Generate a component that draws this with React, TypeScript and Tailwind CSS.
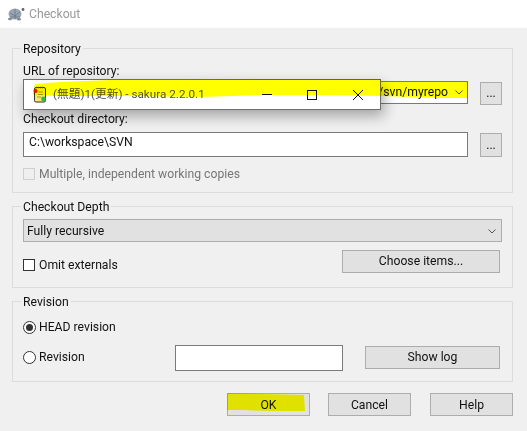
const font = { fontFamily: 'Roboto, "Noto Sans CJK JP", sans-serif' };

// ─── Small controls ──────────────────────────────────────────────────────────
const Chevron = () => (
  <svg width="8" height="5" viewBox="0 0 8 5" className="shrink-0">
    <path d="M0.5 0.5 L4 4 L7.5 0.5" fill="none" stroke="#555" strokeWidth="1" />
  </svg>
);

const Button = ({ label, className }: { label: string; className: string }) => (
  <button className={`flex items-center justify-center bg-[#e1e1e1] border border-[#adadad] text-[#111] text-[12.2px] ${className}`}>
    {label}
  </button>
);

const Radio = ({ checked }: { checked?: boolean }) => (
  <span className="flex items-center justify-center w-[13px] h-[13px] rounded-full border border-[#333] bg-white shrink-0">
    {checked && <span className="w-[7px] h-[7px] rounded-full bg-[#333]" />}
  </span>
);

const Group = ({ title, className, children }: { title: string; className: string; children: React.ReactNode }) => (
  <fieldset className={`border border-[#dcdcdc] px-[10px] ${className}`}>
    <legend className="ml-[-2px] pl-[2px] pr-[2px] h-[14px] leading-[16px] text-[12.2px] text-[#111]">{title}</legend>
    {children}
  </fieldset>
);

// ─── Drawn icons ─────────────────────────────────────────────────────────────
const Tortoise = () => (
  <svg width="18" height="14" viewBox="0 0 18 14" className="shrink-0">
    <ellipse cx="8" cy="7" rx="6.5" ry="5.5" fill="#98a5b3" />
    <path d="M3 6 L8 9 L13 5 M8 2 L8 12 M3 10 L13 10" stroke="#6b7785" strokeWidth="0.8" fill="none" />
    <ellipse cx="3" cy="12" rx="2" ry="1.3" fill="#808b97" />
    <ellipse cx="12" cy="12.3" rx="2" ry="1.2" fill="#808b97" />
    <circle cx="16" cy="2.5" r="1.4" fill="#5a636e" />
  </svg>
);

const SakuraIcon = () => (
  <svg width="15" height="17" viewBox="0 0 15 17" className="shrink-0">
    <rect x="1.5" y="1.5" width="11" height="14.5" rx="1.5" fill="#f6e96a" stroke="#333" strokeWidth="1" />
    <path d="M3 1.5 H11" stroke="#555" strokeWidth="1.5" strokeDasharray="1 1" />
    <path d="M5 6 H10 M5 8.5 H10 M4 11 H8" stroke="#8a8a3a" strokeWidth="0.8" />
    <circle cx="2.5" cy="5" r="2" fill="#e8142c" />
    <circle cx="10.5" cy="13" r="2.4" fill="#2ebd3a" />
  </svg>
);

// ─── Window over the dialog ──────────────────────────────────────────────────
const FloatingWindow = () => (
  <div className="absolute left-[23px] top-[79px] w-[358px] h-[31px] flex items-center bg-white border border-[#6e6e6e] shadow-[3px_6px_14px_rgba(0,0,0,0.32)] pl-[9px]">
    <SakuraIcon />
    <span className="ml-[5px] text-[11.7px] text-[#555] whitespace-nowrap">(無題)1(更新) - sakura 2.2.0.1</span>
    <div className="ml-auto flex items-center">
      <span className="block w-[10px] h-px bg-[#111] mr-[35px]" />
      <span className="block w-[10px] h-[10px] border border-[#111] mr-[36px]" />
      <svg width="10" height="10" viewBox="0 0 10 10" className="mr-[17px]">
        <path d="M0 0 L10 10 M10 0 L0 10" stroke="#111" strokeWidth="1" />
      </svg>
    </div>
  </div>
);

// ─── Yellow marker strokes ───────────────────────────────────────────────────
const Marker = () => (
  <svg width="527" height="431" viewBox="0 0 527 431" className="absolute left-0 top-0 mix-blend-multiply pointer-events-none">
    <path
      d="M33 92 L35 84 L60 82 L110 80 L180 80 L262 79 L381 79 L381 82 L468 82 L468 98 L440 98 L381 96 L330 95 L264 95 L200 97 L120 96 L60 96 L33 95 Z"
      fill="#ffff00"
    />
    <path d="M227 393 L304 395 L305 411 L270 411 L240 410 L227 410 Z" fill="#ffff00" />
  </svg>
);

export default function App() {
  return (
    <div className="relative w-[527px] h-[431px] overflow-hidden bg-[#f0f0f0] flex flex-col" style={font}>
      {/* ── Title bar ── */}
      <div className="h-[28px] bg-white flex items-center pl-[7px] gap-[4px] shrink-0">
        <Tortoise />
        <span className="text-[12.2px] text-[#999]">Checkout</span>
      </div>

      <div className="flex flex-col pt-[13px] pl-[12px] pr-[14px]">
        {/* ── Repository ── */}
        <Group title="Repository" className="h-[152px]">
          <div className="mt-[8px] h-[16px] leading-[16px] text-[12.2px] text-[#111]">URL of repository:</div>
          <div className="mt-[2px] flex">
            <div className="w-[445px] h-[23px] bg-white border border-[#7a7a7a] flex items-center justify-end pr-[4px] gap-[7px] text-[12.2px] text-[#111]">
              <span>/svn/myrepo</span>
              <Chevron />
            </div>
            <Button label="..." className="ml-[12px] mt-[1px] w-[22px] h-[23px]" />
          </div>
          <div className="mt-[6px] h-[16px] leading-[16px] text-[12.2px] text-[#111]">Checkout directory:</div>
          <div className="mt-[5px] flex">
            <div className="w-[445px] h-[25px] bg-white border border-[#7a7a7a] flex items-center pl-[5px] pb-[4px] text-[12.2px] text-[#111]">
              C:\workspace\SVN
            </div>
            <Button label="..." className="ml-[12px] mt-[1px] w-[22px] h-[24px]" />
          </div>
          <div className="mt-[10px] flex items-center h-[14px] gap-[4px]">
            <span className="w-[12px] h-[12px] border border-[#cfcfcf] bg-[#efefef] shrink-0" />
            <span className="text-[12.2px] text-[#777]">Multiple, independent working copies</span>
          </div>
        </Group>

        {/* ── Checkout Depth ── */}
        <Group title="Checkout Depth" className="mt-[6px] h-[89px]">
          <div className="mt-[6px] w-[479px] h-[23px] bg-[#e1e1e1] border border-[#adadad] flex items-center justify-between pl-[3px] pr-[5px] pt-[1px] text-[12.2px] text-[#111]">
            <span>Fully recursive</span>
            <Chevron />
          </div>
          <div className="mt-[8px] flex items-start justify-between pr-[2px]">
            <div className="mt-[6px] flex items-center gap-[4px]">
              <span className="w-[12px] h-[12px] border border-[#333] bg-white shrink-0" />
              <span className="text-[12.2px] text-[#111]">Omit externals</span>
            </div>
            <Button label="Choose items..." className="w-[158px] h-[23px]" />
          </div>
        </Group>

        {/* ── Revision ── */}
        <Group title="Revision" className="mt-[6px] h-[88px]">
          <div className="mt-[12px] flex items-center h-[14px] gap-[3px]">
            <Radio checked />
            <span className="text-[12.2px] text-[#111]">HEAD revision</span>
          </div>
          <div className="mt-[11px] flex items-start">
            <div className="w-[152px] mt-[5px] flex items-center gap-[3px] h-[14px]">
              <Radio />
              <span className="text-[12.2px] text-[#111]">Revision</span>
            </div>
            <div className="w-[168px] h-[26px] bg-white border border-[#7a7a7a]" />
            <Button label="Show log" className="ml-[22px] mt-[1px] w-[135px] h-[23px]" />
          </div>
        </Group>

        {/* ── Dialog buttons ── */}
        <div className="mt-[11px] flex justify-end">
          <Button label="OK" className="w-[83px] h-[23px] pt-[1px]" />
          <Button label="Cancel" className="ml-[18px] w-[83px] h-[23px] pt-[1px]" />
          <Button label="Help" className="ml-[19px] w-[83px] h-[23px] pt-[1px]" />
        </div>
      </div>

      <FloatingWindow />
      <Marker />
    </div>
  );
}
